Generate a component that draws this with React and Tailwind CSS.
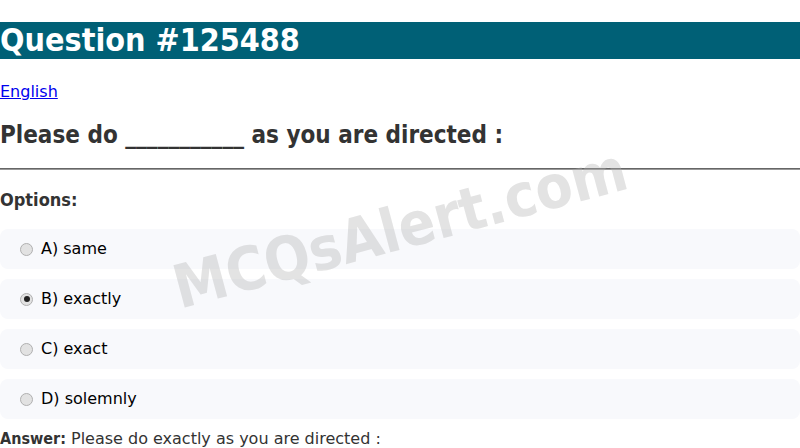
import { useState } from "react";

const options = [
  { key: "A", text: "same" },
  { key: "B", text: "exactly" },
  { key: "C", text: "exact" },
  { key: "D", text: "solemnly" },
];

const Radio = ({ checked }) => (
  <span className="w-[13px] h-[13px] rounded-full border border-[#b0b0b0] bg-[#e2e2e2] flex items-center justify-center shrink-0">
    {checked && <span className="w-[6px] h-[6px] rounded-full bg-[#222]" />}
  </span>
);

export default function App() {
  const [picked, setPicked] = useState("B");

  return (
    <div className="relative min-h-screen bg-white overflow-hidden font-['DejaVu_Sans',sans-serif] text-[#333]">
      <h1 className="mt-[22px] bg-[#006076] text-white text-[32px] leading-[37px] font-bold font-['DejaVu_Sans_Condensed',sans-serif]">Question #125488</h1>

      <a href="#" className="block mt-[24px] text-[16px] leading-[18px] text-[#0000ee] underline">English</a>

      <h2 className="mt-[20px] text-[24px] leading-[28px] font-bold font-['DejaVu_Sans_Condensed',sans-serif] text-[#333]">
        Please do ___________ as you are directed :
      </h2>

      <div className="mt-[19px] h-[2px] bg-[#666] border-b border-[#999]" />

      <h3 className="mt-[19px] text-[18px] leading-[21px] font-bold font-['DejaVu_Sans_Condensed',sans-serif] text-[#333]">Options:</h3>

      <div className="mt-[19px] flex flex-col gap-[10px]">
        {options.map(o => (
          <label key={o.key} onClick={() => setPicked(o.key)}
            className="h-[40px] rounded-[8px] bg-[#f8f9fc] flex items-center gap-[8px] pl-[20px] text-[16px] text-black cursor-pointer">
            <Radio checked={picked === o.key} />
            <span>{o.key}) {o.text}</span>
          </label>
        ))}
      </div>

      <p className="mt-[11px] text-[16px] leading-[18px] text-[#333]">
        <b className="font-['DejaVu_Sans_Condensed',sans-serif]">Answer:</b> Please do exactly as you are directed :
      </p>

      {/* watermark */}
      <div className="pointer-events-none absolute left-[400px] top-[228px] -translate-x-1/2 -translate-y-1/2 -rotate-[15deg] text-[60px] font-bold font-['DejaVu_Sans_Condensed',sans-serif] text-[#b0b0b0] opacity-35 whitespace-nowrap">
        MCQsAlert.com
      </div>
    </div>
  );
}
